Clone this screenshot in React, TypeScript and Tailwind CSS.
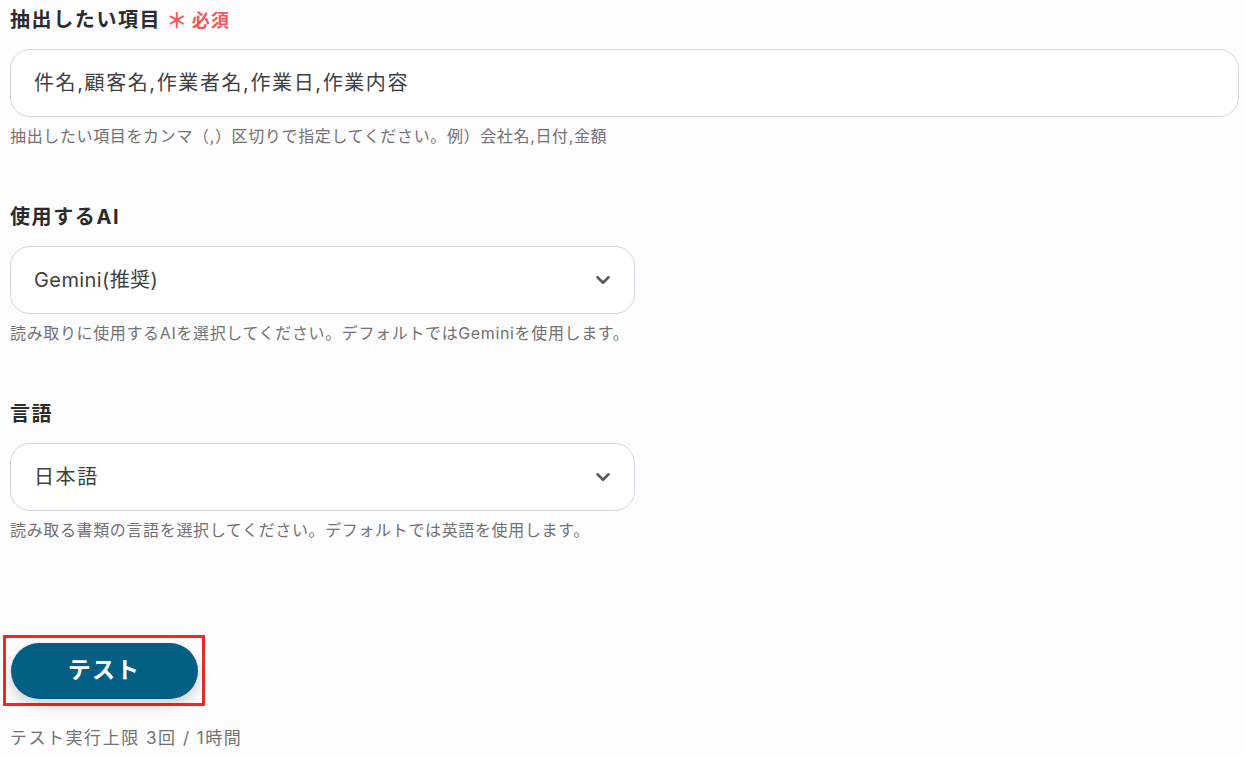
import { ChevronDown } from "lucide-react";

function Field({ label, value, help, select, wide, required, tight }: { label: string; value: string; help: string; select?: boolean; wide?: boolean; required?: boolean; tight?: boolean }) {
  return (
    <div className="flex flex-col">
      <div className="flex items-center h-[36px]">
        <span className="text-[20px] font-bold text-[#2b2b2b] tracking-[0.08em]">{label}</span>
        {required && (
          <span className="ml-[5px] text-[18px] font-bold text-[#f2575a] flex items-center tracking-[0.08em]">
            <span className="text-[21px] mr-[3px] leading-none">＊</span>必須
          </span>
        )}
      </div>
      <div
        className={`mt-[11px] h-[68px] border border-[#d4d6e0] rounded-[20px] bg-white flex items-center justify-between pl-[23px] pr-[20px] ${wide ? "w-[1229px]" : "w-[625px]"}`}
      >
        <span className={`text-[20px] text-[#3f3f3f] ${tight ? "tracking-[0.02em]" : "tracking-[0.08em]"}`}>{value}</span>
        {select && <ChevronDown size={22} strokeWidth={2.8} className="text-[#5a5a5a]" />}
      </div>
      <div className="mt-[7px] text-[16px] text-[#727272] tracking-[0.04em]">{help}</div>
    </div>
  );
}

export default function App() {
  return (
    <div
      className="w-[1245px] h-[757px] bg-[#fdfcfe] pl-[10px] pt-[2px] overflow-hidden"
      style={{ fontFamily: '"Inter", "Noto Sans CJK JP", sans-serif' }}
    >
      <div className="flex flex-col gap-[51px]">
        <Field
          label="抽出したい項目"
          required
          wide
          value="件名,顧客名,作業者名,作業日,作業内容"
          help="抽出したい項目をカンマ（,）区切りで指定してください。例）会社名,日付,金額"
        />
        <Field
          label="使用するAI"
          select
          tight
          value="Gemini(推奨)"
          help="読み取りに使用するAIを選択してください。デフォルトではGeminiを使用します。"
        />
        <Field
          label="言語"
          select
          value="日本語"
          help="読み取る書類の言語を選択してください。デフォルトでは英語を使用します。"
        />
      </div>
      <div className="mt-[93px] -ml-[7px] w-[202px] h-[71px] border-[3px] border-[#ee2a24] flex items-center justify-center">
        <button className="w-[187px] h-[56px] rounded-full bg-[#035f84] text-white text-[23px] font-bold tracking-[0.05em] shadow-[0_6px_14px_rgba(0,0,0,0.18)]">
          テスト
        </button>
      </div>
      <div className="mt-[20px] text-[17px] text-[#727272] tracking-[0.09em]">テスト実行上限 3回 / 1時間</div>
    </div>
  );
}
